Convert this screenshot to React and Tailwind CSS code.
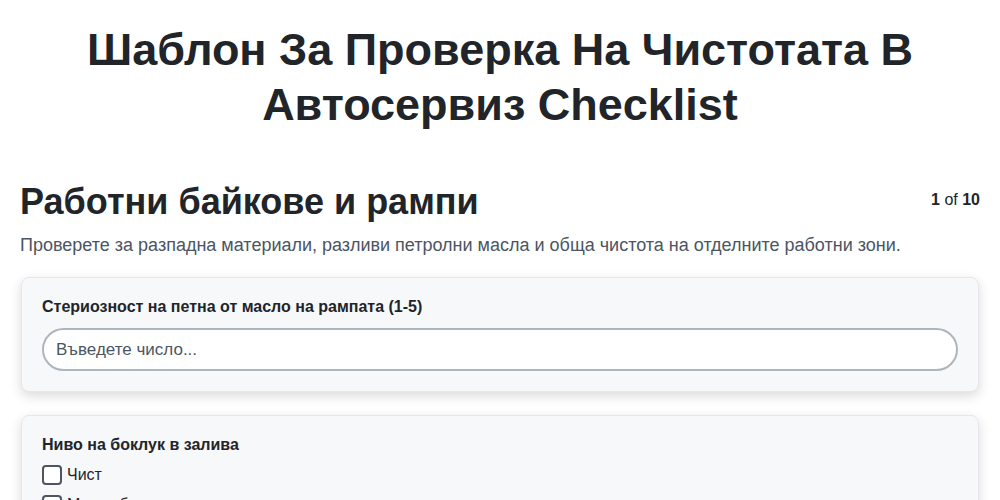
import React from 'react';

const options = ['Чист', 'Малко боклук', 'Умерено', 'Много боклук'];

const App = () => {
    return (
        <div className="min-h-screen bg-white px-5 font-['Liberation_Sans',Arial,sans-serif] text-[#212529]">
            <h1 className="pt-[22px] text-center text-[45px] font-bold leading-[55px]">
                Шаблон За Проверка На Чистотата В<br />Автосервиз Checklist
            </h1>

            <div className="mt-[48px] flex items-start justify-between">
                <h2 className="text-[36px] font-bold leading-[44px]">Работни байкове и рампи</h2>
                <div className="pt-[8px] text-[16px]">
                    <span className="font-bold">1</span> of <span className="font-bold">10</span>
                </div>
            </div>
            <p className="mt-[8px] text-[18px] leading-[27px] text-[#4b5563]">
                Проверете за разпадна материали, разливи петролни масла и обща чистота на отделните работни зони.
            </p>

            <div className="mt-[18px] space-y-[23px]">
                <div className="mx-px rounded-lg border border-[#e5e7eb] bg-[#f7f8fa] px-5 pb-5 pt-[17px] shadow-[0_4px_12px_rgba(0,0,0,0.15)]">
                    <label className="block text-[16px] font-bold leading-[24px]">Стериозност на петна от масло на рампата (1-5)</label>
                    <input
                        type="number"
                        placeholder="Въведете число..."
                        className="mt-[9px] h-[43px] w-full rounded-full border-2 border-[#adb5bd] bg-white px-3 text-[17px] placeholder:text-[#4b5563] focus:outline-none"
                    />
                </div>

                <div className="mx-px rounded-lg border border-[#e5e7eb] bg-[#f7f8fa] px-5 pb-5 pt-[17px] shadow-[0_4px_12px_rgba(0,0,0,0.15)]">
                    <label className="block text-[16px] font-bold leading-[24px]">Ниво на боклук в залива</label>
                    <div className="mt-[6px] space-y-[6px]">
                        {options.map(opt => (
                            <label key={opt} className="flex h-[24px] items-center gap-[5px] text-[16px]">
                                <span className="inline-block h-[20px] w-[20px] rounded-[4px] border-2 border-[#4b5563] bg-white" />
                                {opt}
                            </label>
                        ))}
                    </div>
                </div>
            </div>
        </div>
    );
};

export default App;
